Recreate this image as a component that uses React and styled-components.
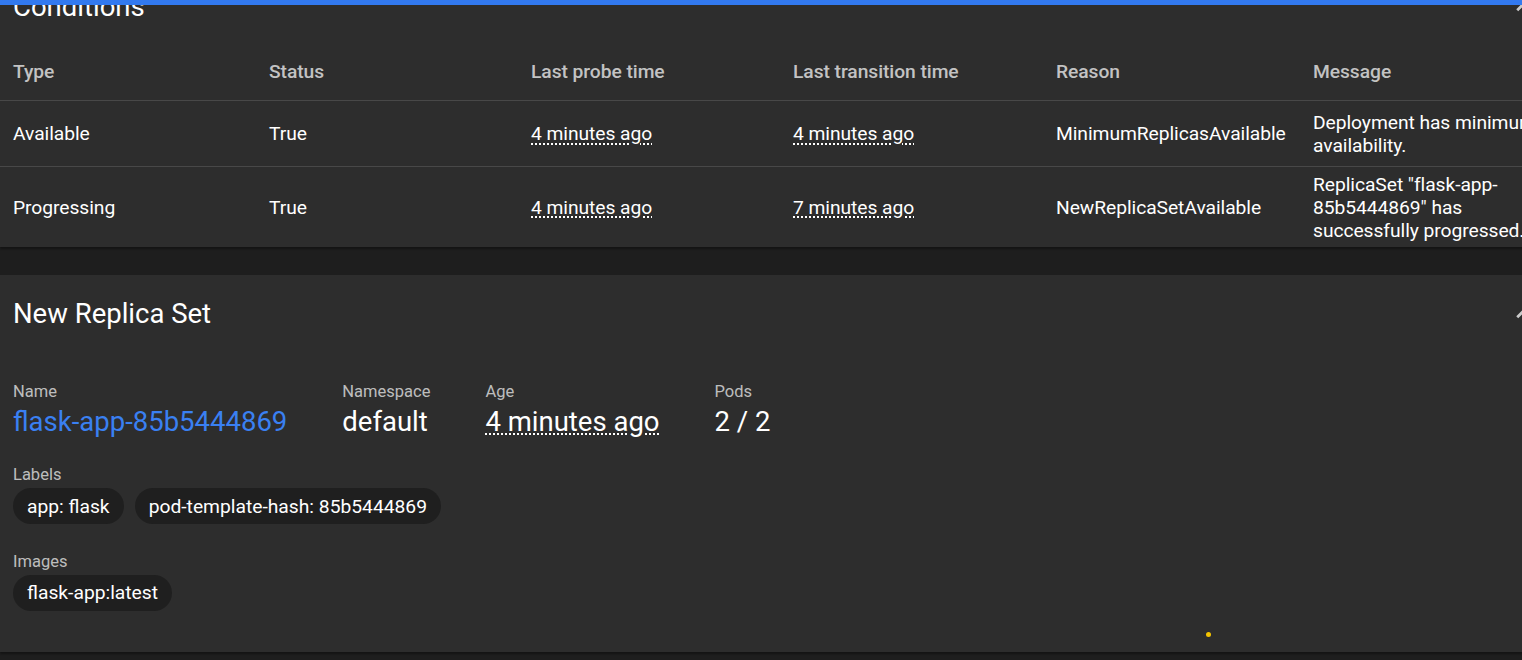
import React from 'react'
import styled, { createGlobalStyle } from 'styled-components'

const GlobalStyle = createGlobalStyle`
    html, body {
        margin: 0;
        padding: 0;
        background: #1e1e1e;
        overflow: hidden;
        font-family: Roboto, "Liberation Sans", sans-serif;
    }
`

// Page frame
const Page = styled.div`
    width: 1522px;
    height: 660px;
    overflow: hidden;
    display: flex;
    flex-direction: column;
    background: #1e1e1e;
`

const TopBar = styled.div`
    height: 5px;
    flex: 0 0 5px;
    background: #3279ef;
    position: relative;
    z-index: 2;
`

const Viewport = styled.div`
    flex: 1;
    overflow: hidden;
`

const Content = styled.div`
    margin-top: ${ ( { offset } ) => offset }px;
    display: flex;
    flex-direction: column;
    gap: 28px;
`

const Card = styled.section`
    position: relative;
    width: 1559px;
    background: #2d2d2d;
    box-shadow: 0 2px 2px rgba(0, 0, 0, 0.35);
    padding: 22px 0 ${ ( { bottom } ) => bottom || 0 }px 0;
    box-sizing: border-box;
`

const CardHeader = styled.header`
    display: flex;
    align-items: center;
    padding: 0 18px 0 13px;
    height: 33px;
`

const Title = styled.h2`
    margin: 0;
    font-size: 27.5px;
    line-height: 33px;
    font-weight: 400;
    color: #ffffff;
`

const Chevron = styled.svg`
    margin-left: auto;
    width: 33px;
    height: 33px;
    fill: rgba(255, 255, 255, 0.75);
`

// Conditions table
const Table = styled.div`
    margin-top: 20px;
`

const Row = styled.div`
    display: grid;
    grid-template-columns: 256px 262px 262px 263px 257px 259px;
    align-items: center;
    min-height: ${ ( { head } ) => head ? 58 : 66 }px;
    padding: ${ ( { head } ) => head ? 0 : 5.5 }px 0;
    box-sizing: border-box;
    border-bottom: ${ ( { last } ) => last ? 'none' : '1px solid #484848' };
`

const Cell = styled.div`
    padding: 0 11px 0 13px;
    font-size: 19.25px;
    line-height: 23px;
    letter-spacing: -0.06px;
    font-weight: ${ ( { head } ) => head ? 500 : 400 };
    color: ${ ( { head } ) => head ? 'rgba(255, 255, 255, 0.72)' : '#ffffff' };
`

const Ago = styled.span`
    text-decoration: underline dotted;
    text-underline-offset: 3px;
    text-decoration-thickness: 1.5px;
`

// Replica set details
const Body = styled.div`
    padding: 0 13px;
`

const MetaRow = styled.div`
    display: flex;
    gap: 55px;
    margin-top: 52px;
`

const MetaItem = styled.div`
    display: flex;
    flex-direction: column;
`

const MetaLabel = styled.div`
    font-size: 16.5px;
    line-height: 20px;
    color: rgba(255, 255, 255, 0.7);
    margin-bottom: ${ ( { gap } ) => gap || 2.5 }px;
`

const MetaValue = styled.div`
    font-size: 27.5px;
    line-height: 33px;
    color: ${ ( { link } ) => link ? '#3a80f2' : '#ffffff' };
`

const Section = styled.div`
    margin-top: 27.5px;
`

const Chips = styled.div`
    display: flex;
    gap: 11px;
`

const Chip = styled.span`
    display: inline-flex;
    align-items: center;
    height: 36px;
    padding: 0 14px;
    border-radius: 18px;
    background: #1f1f1f;
    color: #ffffff;
    font-size: 19.25px;
`

const Dot = styled.span`
    position: absolute;
    left: 1206px;
    top: 357px;
    width: 5px;
    height: 5px;
    border-radius: 50%;
    background: #f5c400;
`

const conditions = [
    { type: 'Available', status: 'True', probe: '4 minutes ago', transition: '4 minutes ago', reason: 'MinimumReplicasAvailable', message: 'Deployment has minimum availability.' },
    { type: 'Progressing', status: 'True', probe: '4 minutes ago', transition: '7 minutes ago', reason: 'NewReplicaSetAvailable', message: 'ReplicaSet "flask-app-85b5444869" has successfully progressed.' },
]

const ExpandLess = () => <Chevron viewBox="0 0 24 24">
    <path d="M7.41 15.41L12 10.83l4.59 4.58L18 14l-6-6-6 6z" />
</Chevron>

export default function App() {
    return <Page>
        <GlobalStyle />
        <TopBar />
        <Viewport>
            <Content offset={ -37 }>
                <Card>
                    <CardHeader>
                        <Title>Conditions</Title>
                        <ExpandLess />
                    </CardHeader>
                    <Table>
                        <Row head>
                            { [ 'Type', 'Status', 'Last probe time', 'Last transition time', 'Reason', 'Message' ].map( h => <Cell head key={ h }>{ h }</Cell> ) }
                        </Row>
                        { conditions.map( ( c, i ) => <Row key={ c.type } last={ i === conditions.length - 1 }>
                            <Cell>{ c.type }</Cell>
                            <Cell>{ c.status }</Cell>
                            <Cell><Ago>{ c.probe }</Ago></Cell>
                            <Cell><Ago>{ c.transition }</Ago></Cell>
                            <Cell>{ c.reason }</Cell>
                            <Cell>{ c.message }</Cell>
                        </Row> ) }
                    </Table>
                </Card>

                <Card bottom={ 41 }>
                    <CardHeader>
                        <Title>New Replica Set</Title>
                        <ExpandLess />
                    </CardHeader>
                    <Body>
                        <MetaRow>
                            <MetaItem>
                                <MetaLabel>Name</MetaLabel>
                                <MetaValue link>flask-app-85b5444869</MetaValue>
                            </MetaItem>
                            <MetaItem>
                                <MetaLabel>Namespace</MetaLabel>
                                <MetaValue>default</MetaValue>
                            </MetaItem>
                            <MetaItem>
                                <MetaLabel>Age</MetaLabel>
                                <MetaValue><Ago>4 minutes ago</Ago></MetaValue>
                            </MetaItem>
                            <MetaItem>
                                <MetaLabel>Pods</MetaLabel>
                                <MetaValue>2 / 2</MetaValue>
                            </MetaItem>
                        </MetaRow>
                        <Section>
                            <MetaLabel gap={ 3 }>Labels</MetaLabel>
                            <Chips>
                                <Chip>app: flask</Chip>
                                <Chip>pod-template-hash: 85b5444869</Chip>
                            </Chips>
                        </Section>
                        <Section>
                            <MetaLabel gap={ 3 }>Images</MetaLabel>
                            <Chips>
                                <Chip>flask-app:latest</Chip>
                            </Chips>
                        </Section>
                    </Body>
                    <Dot />
                </Card>
            </Content>
        </Viewport>
    </Page>
}
